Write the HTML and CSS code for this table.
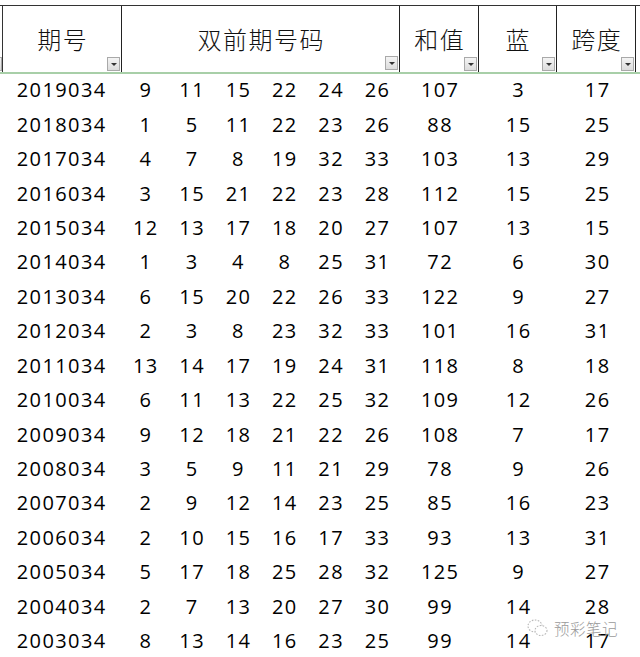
FILE: index.html
```html
<!DOCTYPE html>
<html lang="zh">
<head>
<meta charset="utf-8">
<link rel="stylesheet" href="styles.css">
</head>
<body>
<div class="sheet">
  <div class="head">
    <div class="h stub"><span class="dd part"></span></div>
    <div class="h c1"><span class="title">期号</span><span class="dd"></span></div>
    <div class="h grp">
      <span class="title">双前期号码</span>
      <div class="ddrow">
        <div class="sub"><span class="dd"></span></div>
        <div class="sub"><span class="dd"></span></div>
        <div class="sub"><span class="dd"></span></div>
        <div class="sub"><span class="dd"></span></div>
        <div class="sub"><span class="dd"></span></div>
        <div class="sub"><span class="dd"></span></div>
      </div>
    </div>
    <div class="h c8"><span class="title">和值</span><span class="dd"></span></div>
    <div class="h c9"><span class="title">蓝</span><span class="dd"></span></div>
    <div class="h c10"><span class="title">跨度</span><span class="dd"></span></div>
    <div class="h tail"></div>
  </div>
  <div class="rows" id="rows"></div>
  <div class="mark">
    <svg width="22" height="20" viewBox="0 0 22 20">
      <ellipse cx="8" cy="8" rx="7" ry="6" fill="none" stroke="#b8b8b8" stroke-width="1.1" stroke-dasharray="1.6 1.4"/>
      <ellipse cx="14" cy="12.5" rx="6" ry="5" fill="#fff" stroke="#b8b8b8" stroke-width="1.1" stroke-dasharray="1.6 1.4"/>
    </svg>
    <span>预彩笔记</span>
  </div>
</div>
<script src="app.js"></script>
</body>
</html>
```
FILE: app.js
```js
var data = [
["2019034",9,11,15,22,24,26,107,3,17],
["2018034",1,5,11,22,23,26,88,15,25],
["2017034",4,7,8,19,32,33,103,13,29],
["2016034",3,15,21,22,23,28,112,15,25],
["2015034",12,13,17,18,20,27,107,13,15],
["2014034",1,3,4,8,25,31,72,6,30],
["2013034",6,15,20,22,26,33,122,9,27],
["2012034",2,3,8,23,32,33,101,16,31],
["2011034",13,14,17,19,24,31,118,8,18],
["2010034",6,11,13,22,25,32,109,12,26],
["2009034",9,12,18,21,22,26,108,7,17],
["2008034",3,5,9,11,21,29,78,9,26],
["2007034",2,9,12,14,23,25,85,16,23],
["2006034",2,10,15,16,17,33,93,13,31],
["2005034",5,17,18,25,28,32,125,9,27],
["2004034",2,7,13,20,27,30,99,14,28],
["2003034",8,13,14,16,23,25,99,14,17]
];
var rows = document.getElementById('rows');
data.forEach(function (r) {
  var row = document.createElement('div');
  row.className = 'row';
  r.forEach(function (v) {
    var c = document.createElement('div');
    c.className = 'cell';
    c.textContent = v;
    row.appendChild(c);
  });
  rows.appendChild(row);
});
```
FILE: styles.css
```css
html, body {
  margin: 0;
  padding: 0;
  background: #fff;
}
.sheet {
  position: relative;
  width: 640px;
  height: 657px;
  overflow: hidden;
  background: #fff;
  padding-top: 5px;
  box-sizing: border-box;
}
.head {
  display: grid;
  grid-template-columns: 3px 119px 278px 79px 78px 79px 4px;
  height: 66px;
  border-top: 1px solid #333;
  border-bottom: 2px solid #a8cfa8;
  box-sizing: content-box;
}
.h {
  position: relative;
  border-right: 1px solid #222;
  box-sizing: border-box;
  display: flex;
  flex-direction: column;
  align-items: center;
}
.h.tail { border-right: none; }
.h.stub { border-right: 1.5px solid #333; }
.title {
  font-family: "Noto Sans CJK SC", sans-serif;
  font-weight: 300;
  font-size: 24px;
  letter-spacing: 1.5px;
  line-height: 30px;
  margin-top: 18px;
  color: #111;
  padding-left: 1.5px;
}
.h .dd {
  position: absolute;
  right: 1px;
  bottom: 1px;
}
.dd {
  display: block;
  width: 13px;
  height: 14px;
  box-sizing: border-box;
  border: 1px solid #a9a9a9;
  background: linear-gradient(#f4f4f4, #dcdcdc);
}
.dd::after {
  content: "";
  display: block;
  margin: 5px auto 0;
  width: 0;
  height: 0;
  border-left: 3px solid transparent;
  border-right: 3px solid transparent;
  border-top: 3px solid #333;
}
.dd.part {
  right: 0;
  width: 3px;
  border-left: none;
}
.dd.part::after { display: none; }
.grp .ddrow {
  position: absolute;
  left: 0;
  right: 0;
  bottom: 1px;
  display: grid;
  grid-template-columns: repeat(6, 1fr);
}
.grp .sub {
  display: flex;
  justify-content: flex-end;
  padding-right: 1px;
}
.rows {
  display: flex;
  flex-direction: column;
  margin-top: -1px;
}
.row {
  display: grid;
  grid-template-columns: 122px repeat(6, 46.33px) 79px 78px 80px;
  height: 34.45px;
  align-items: center;
}
.cell {
  text-align: center;
  font-family: "Open Sans", sans-serif;
  font-size: 20px;
  font-weight: 500;
  letter-spacing: 1.4px;
  padding-left: 1.4px;
  color: #000;
  line-height: 34px;
}
.mark {
  position: absolute;
  left: 527px;
  top: 617px;
  display: flex;
  align-items: center;
  gap: 5px;
}
.mark span {
  font-family: "Noto Sans CJK SC", sans-serif;
  font-weight: 300;
  font-size: 15.5px;
  color: #9a9a9a;
  letter-spacing: 0.5px;
}
```
